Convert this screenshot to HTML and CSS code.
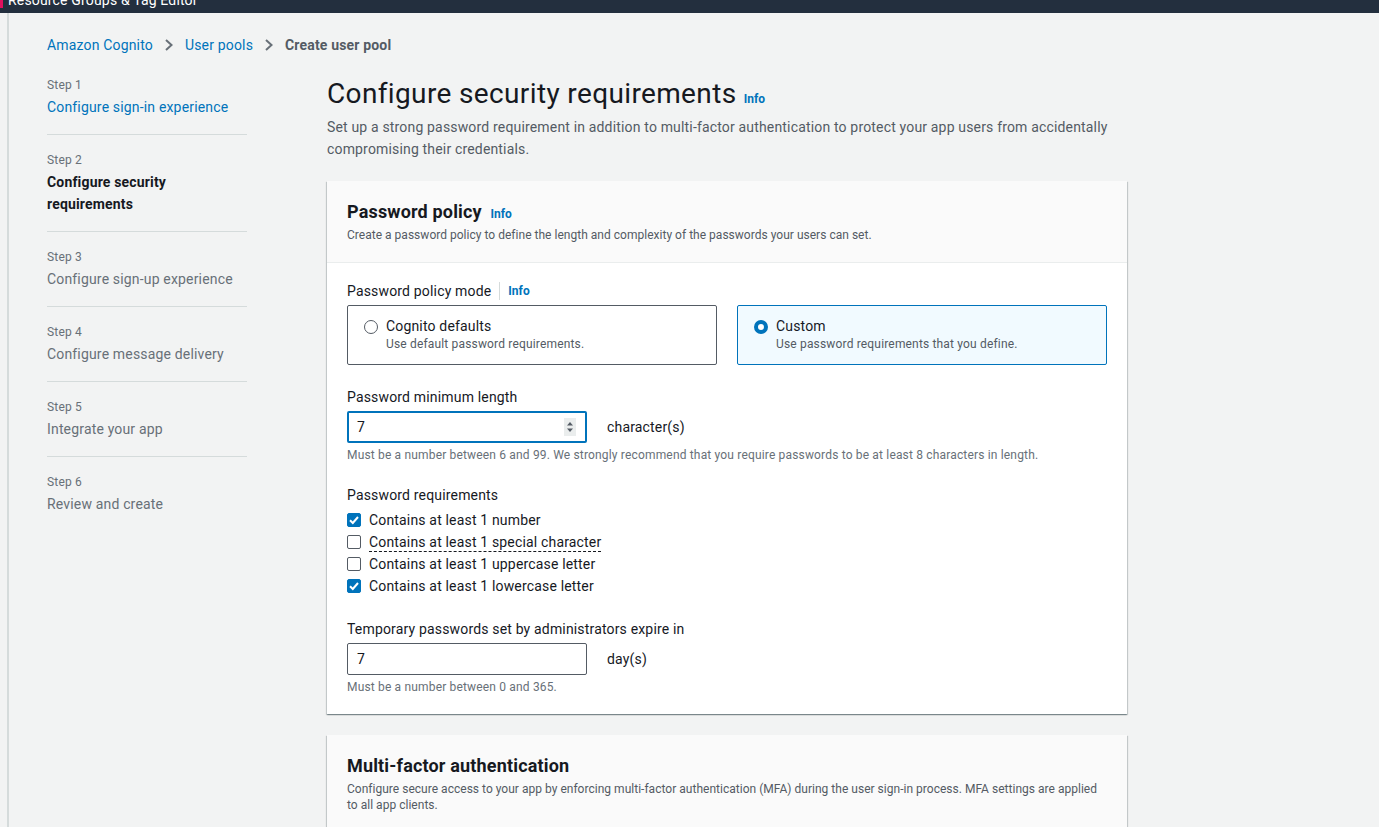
FILE: index.html
```html
<!DOCTYPE html>
<html lang="en">
<head>
<meta charset="utf-8">
<title>Create user pool</title>
<link rel="stylesheet" href="styles.css">
</head>
<body>
<div class="topbar"><span class="topbar-mark"></span><span class="topbar-text">Resource Groups &amp; Tag Editor</span></div>
<div class="shell">
  <nav class="breadcrumbs">
    <a class="crumb-link">Amazon Cognito</a>
    <svg class="crumb-sep" width="10" height="16" viewBox="0 0 10 16"><path d="M2 3l5.5 5L2 13" fill="none" stroke="#687078" stroke-width="2"/></svg>
    <a class="crumb-link">User pools</a>
    <svg class="crumb-sep" width="10" height="16" viewBox="0 0 10 16"><path d="M2 3l5.5 5L2 13" fill="none" stroke="#687078" stroke-width="2"/></svg>
    <span class="crumb-current">Create user pool</span>
  </nav>
  <div class="layout">
    <ul class="steps">
      <li class="step"><div class="step-label">Step 1</div><a class="step-title link">Configure sign-in experience</a></li>
      <li class="step"><div class="step-label">Step 2</div><div class="step-title active">Configure security<br>requirements</div></li>
      <li class="step"><div class="step-label">Step 3</div><div class="step-title">Configure sign-up experience</div></li>
      <li class="step"><div class="step-label">Step 4</div><div class="step-title">Configure message delivery</div></li>
      <li class="step"><div class="step-label">Step 5</div><div class="step-title">Integrate your app</div></li>
      <li class="step"><div class="step-label">Step 6</div><div class="step-title">Review and create</div></li>
    </ul>
    <main class="main">
      <h1 class="page-title">Configure security requirements <a class="info">Info</a></h1>
      <p class="page-desc">Set up a strong password requirement in addition to multi-factor authentication to protect your app users from accidentally compromising their credentials.</p>

      <section class="panel">
        <header class="panel-head">
          <h2 class="panel-title">Password policy <a class="info">Info</a></h2>
          <p class="panel-desc">Create a password policy to define the length and complexity of the passwords your users can set.</p>
        </header>
        <div class="panel-body">
          <div class="field-label">Password policy mode <span class="label-sep"></span><a class="info">Info</a></div>
          <div class="tiles">
            <div class="tile">
              <span class="radio"></span>
              <div><div class="tile-title">Cognito defaults</div><div class="tile-desc">Use default password requirements.</div></div>
            </div>
            <div class="tile selected">
              <span class="radio checked"></span>
              <div><div class="tile-title">Custom</div><div class="tile-desc">Use password requirements that you define.</div></div>
            </div>
          </div>

          <div class="field">
            <div class="field-label">Password minimum length</div>
            <div class="input-row">
              <div class="input focused"><span>7</span>
                <svg class="spinner" width="12" height="18" viewBox="0 0 12 18"><rect width="12" height="18" fill="#eaeded"/><path d="M3 7.5 6 4l3 3.5z" fill="#545b64"/><path d="M3 10.5 6 14l3-3.5z" fill="#545b64"/></svg>
              </div>
              <span class="unit">character(s)</span>
            </div>
            <div class="hint">Must be a number between 6 and 99. We strongly recommend that you require passwords to be at least 8 characters in length.</div>
          </div>

          <div class="field">
            <div class="field-label">Password requirements</div>
            <ul class="checks">
              <li><span class="cb on"><svg width="14" height="14" viewBox="0 0 14 14"><path d="M3 7.2 5.8 10 11 4" fill="none" stroke="#fff" stroke-width="2"/></svg></span>Contains at least 1 number</li>
              <li><span class="cb"></span><span class="dashed">Contains at least 1 special character</span></li>
              <li><span class="cb"></span>Contains at least 1 uppercase letter</li>
              <li><span class="cb on"><svg width="14" height="14" viewBox="0 0 14 14"><path d="M3 7.2 5.8 10 11 4" fill="none" stroke="#fff" stroke-width="2"/></svg></span>Contains at least 1 lowercase letter</li>
            </ul>
          </div>

          <div class="field">
            <div class="field-label">Temporary passwords set by administrators expire in</div>
            <div class="input-row">
              <div class="input"><span>7</span></div>
              <span class="unit">day(s)</span>
            </div>
            <div class="hint">Must be a number between 0 and 365.</div>
          </div>
        </div>
      </section>

      <section class="panel">
        <header class="panel-head">
          <h2 class="panel-title">Multi-factor authentication</h2>
          <p class="panel-desc spaced">Configure secure access to your app by enforcing multi-factor authentication (MFA) during the user sign-in process. MFA settings are applied to all app clients.</p>
        </header>
        <div class="panel-body tall"></div>
      </section>
    </main>
  </div>
</div>
</body>
</html>
```

FILE: styles.css
```css
* { box-sizing: border-box; }
html, body { margin: 0; padding: 0; }
body {
  background: #f2f3f3;
  font-family: Roboto, "Open Sans", Arial, sans-serif;
  color: #16191f;
  font-size: 14px;
  letter-spacing: 0.012em;
  overflow: hidden;
  height: 827px;
}
a { text-decoration: none; cursor: pointer; }
ul { list-style: none; margin: 0; padding: 0; }
h1, h2, p { margin: 0; }

.topbar {
  height: 13px;
  background: #232f3e;
  position: relative;
  overflow: hidden;
  display: flex;
  align-items: flex-end;
}
.topbar-mark {
  position: absolute;
  left: 0; top: 0;
  width: 3px; height: 8px;
  background: #e0115f;
}
.topbar-text {
  color: #fff;
  font-size: 14px;
  line-height: 14px;
  margin-left: 8px;
  transform: translateY(-6px);
}

.shell {
  margin-left: 7px;
  border-left: 2px solid #d5dbdb;
  height: 814px;
  padding-left: 38px;
}

.breadcrumbs {
  display: flex;
  align-items: center;
  height: 64px;
}
.crumb-link { color: #0073bb; font-size: 14px; }
.crumb-sep { margin: 0 11px 0 11px; flex: none; }
.crumb-current { color: #545b64; font-weight: 700; font-size: 14px; }

.layout {
  display: flex;
  gap: 80px;
}
.steps { width: 200px; flex: none; }
.step { padding: 17px 0 16px; border-bottom: 1px solid #d5dbdb; }
.step:first-child { padding-top: 0; }
.step:last-child { border-bottom: none; }
.step-label { font-size: 12px; line-height: 16px; color: #687078; }
.step-title { margin-top: 3px; font-size: 14px; line-height: 22px; color: #687078; }
.step-title.link { display: block; color: #0073bb; }
.step-title.active { color: #16191f; font-weight: 700; }

.main { width: 800px; flex: none; }
.page-title {
  font-size: 28px;
  line-height: 36px;
  font-weight: 400;
  color: #16191f;
  margin-top: -1px;
  letter-spacing: 0.013em;
}
.info { color: #0073bb; font-size: 12px; font-weight: 700; letter-spacing: 0; }
.page-desc {
  font-size: 14px;
  line-height: 22px;
  color: #545b64;
  margin-top: -1px;
}

.panel {
  background: #fff;
  margin-top: 21px;
  box-shadow: 0 1px 1px 0 rgba(0,28,36,.3), 1px 1px 1px 0 rgba(0,28,36,.15), -1px 1px 1px 0 rgba(0,28,36,.15);
}
.panel-head {
  background: #fafafa;
  border-bottom: 1px solid #eaeded;
  padding: 20px 18px 19px 20px;
}
.panel-title { font-size: 18px; line-height: 22px; font-weight: 700; color: #16191f; }
.panel-title .info { margin-left: 4px; }
.panel-desc { font-size: 12px; line-height: 16px; color: #545b64; margin-top: 2px; letter-spacing: 0.02px; }
.panel-desc.spaced { margin-top: 4px; }
.panel-body { padding: 17px 20px 19px; }
.panel-body.tall { height: 60px; }

.field-label { font-size: 14px; line-height: 22px; color: #16191f; display: flex; align-items: center; }
.label-sep { width: 1px; height: 18px; background: #d5dbdb; margin: 0 8px; }

.tiles { display: flex; gap: 20px; margin-top: 3px; }
.tile {
  width: 370px;
  height: 60px;
  border: 1px solid #545b64;
  border-radius: 2px;
  display: flex;
  gap: 8px;
  padding: 9px 15px 9px 16px;
}
.tile.selected { border-color: #0073bb; background: #f1faff; }
.radio {
  width: 14px; height: 14px;
  border: 1px solid #545b64;
  border-radius: 50%;
  flex: none;
  margin-top: 5px;
  background: #fff;
}
.radio.checked { border: 4px solid #0073bb; }
.tile-title { font-size: 14px; line-height: 22px; }
.tile-desc { font-size: 12px; line-height: 16px; color: #545b64; margin-top: -1px; }

.field { margin-top: 21px; }
.input-row { display: flex; align-items: center; gap: 20px; margin-top: 3px; }
.input {
  width: 240px;
  height: 32px;
  border: 1px solid #545b64;
  border-radius: 2px;
  display: flex;
  align-items: center;
  justify-content: space-between;
  padding: 0 10px 0 9px;
  font-size: 14px;
  background: #fff;
}
.input.focused { border: 2px solid #0073bb; padding: 0 9px 0 8px; }
.unit { font-size: 14px; }
.hint { font-size: 12px; line-height: 16px; color: #687078; margin-top: 4px; }

.checks { margin-top: 3px; }
.checks li { display: flex; align-items: center; gap: 8px; height: 22px; font-size: 14px; }
.cb {
  width: 14px; height: 14px;
  border: 1px solid #545b64;
  border-radius: 2px;
  flex: none;
  display: flex;
  background: #fff;
}
.cb.on { background: #0073bb; border-color: #0073bb; }
.cb.on svg { margin: -1px; }
.dashed { border-bottom: 1px dashed #16191f; line-height: 18px; }
```
